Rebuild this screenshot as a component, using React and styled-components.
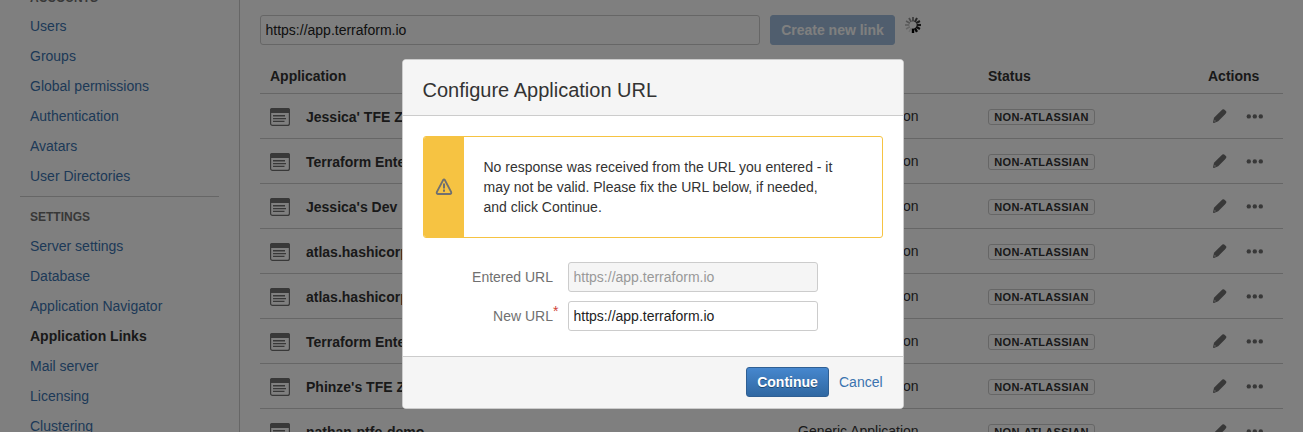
import React from "react";
import styled, { createGlobalStyle } from "styled-components";

const GlobalStyle = createGlobalStyle`
  * { box-sizing: border-box; }
  html, body { margin: 0; height: 100%; overflow: hidden; background: #fff; }
  body, input, button { font-family: "Liberation Sans", Arial, sans-serif; font-size: 14px; color: #333; }
`;

const Page = styled.div`
  position: relative;
  display: flex;
  height: 432px;
  overflow: hidden;
  background: #fff;
`;

const Sidebar = styled.nav`
  flex: none;
  width: 240px;
  padding: 0 20px;
  border-right: 1px solid #ccc;
`;

const NavHeading = styled.h2`
  margin: ${(p) => (p.$first ? "-11px" : "5px")} 0 0;
  padding: 0 10px;
  height: ${(p) => (p.$first ? "22px" : "35px")};
  border-top: ${(p) => (p.$first ? "0" : "1px solid #ccc")};
  line-height: ${(p) => (p.$first ? "19px" : "40px")};
  font-size: 12px;
  text-transform: uppercase;
  color: #707070;
`;

const NavItem = styled.a`
  display: block;
  height: 30px;
  padding-left: 10px;
  line-height: 30px;
  white-space: nowrap;
  color: ${(p) => (p.$active ? "#333" : "#3b73af")};
  font-weight: ${(p) => (p.$active ? 700 : 400)};
`;

const Main = styled.main`
  flex: 1;
  padding: 15px 20px 0;
`;

const LinkForm = styled.div`
  display: flex;
  gap: 10px;
  height: 30px;
`;

const TextInput = styled.input`
  width: ${(p) => p.$width}px;
  height: 30px;
  padding: 0 4.5px;
  border: 1px solid #ccc;
  border-radius: 3px;
  background: ${(p) => (p.disabled ? "#f5f5f5" : "#fff")};
  color: ${(p) => (p.disabled ? "#999" : "#222")};
  outline: 0;
`;

const Button = styled.button`
  width: ${(p) => p.$width}px;
  height: 30px;
  padding: 0;
  border: 1px solid ${(p) => (p.$busy ? "#a0bddc" : "#2f5f93")};
  border-radius: 3px;
  background: ${(p) => (p.$busy ? "#a0bddc" : "linear-gradient(#4687ce, #3068a2)")};
  color: #fff;
  text-shadow: ${(p) => (p.$busy ? "none" : "0 1px 0 rgba(0,0,0,.4)")};
  font-weight: 700;
  white-space: nowrap;
`;

const SpinnerSvg = styled.svg`
  margin-top: 2px;
`;

const HeadRow = styled.div`
  display: grid;
  grid-template-columns: 528px 190px 220px 85px;
  height: 34px;
  margin-top: 15px;
  border-bottom: 1px solid #ccc;
  line-height: 33px;
  font-weight: 700;
  > span { padding-left: 10px; }
`;

const Row = styled.div`
  display: grid;
  grid-template-columns: 528px 190px 220px 85px;
  align-items: center;
  height: 45px;
  border-bottom: 1px solid #ccc;
`;

const NameCell = styled.div`
  display: flex;
  align-items: center;
  gap: 16px;
  padding: 1px 0 0 10px;
  font-weight: 700;
`;

const TypeCell = styled.div`
  padding-left: 10px;
`;

const StatusCell = styled.div`
  display: flex;
  padding: 1px 0 0 10px;
`;

const Lozenge = styled.span`
  width: 107px;
  height: 16px;
  border: 1px solid #ccc;
  border-radius: 3px;
  text-align: center;
  line-height: 15px;
  font-size: 11px;
  font-weight: 700;
  letter-spacing: 0.32px;
`;

const ActionCell = styled.div`
  display: flex;
  align-items: center;
  gap: 19px;
  padding-left: 15px;
`;

const Blanket = styled.div`
  position: absolute;
  inset: 0;
  background: rgba(0, 0, 0, 0.5);
`;

const Dialog = styled.section`
  position: absolute;
  left: 402px;
  top: 59px;
  width: 502px;
  height: 350px;
  display: flex;
  flex-direction: column;
  overflow: hidden;
  border: 1px solid #ccc;
  border-radius: 4px;
  background: #fff;
`;

const DialogHeader = styled.h1`
  margin: 0;
  height: 56px;
  padding-left: 19.5px;
  border-bottom: 1px solid #ccc;
  background: #f5f5f5;
  line-height: 60px;
  font-size: 20px;
  font-weight: 400;
`;

const DialogBody = styled.div`
  flex: 1;
  padding: 20px;
`;

const DialogFooter = styled.footer`
  display: flex;
  align-items: flex-start;
  justify-content: flex-end;
  gap: 10px;
  height: 52px;
  padding: 10px 20px;
  border-top: 1px solid #ccc;
  background: #f5f5f5;
`;

const CancelLink = styled.a`
  width: 44px;
  line-height: 30px;
  color: #3b73af;
`;

const Warning = styled.div`
  display: flex;
  height: 102px;
  border: 1px solid #f6c342;
  border-radius: 3px;
  overflow: hidden;
`;

const WarningStrip = styled.div`
  flex: none;
  display: flex;
  align-items: center;
  justify-content: center;
  width: 40px;
  background: #f6c342;
`;

const WarningText = styled.p`
  margin: 0;
  padding: 20px 0 0 19.5px;
  line-height: 20px;
  white-space: nowrap;
`;

const Field = styled.label`
  display: flex;
  align-items: center;
  gap: 15px;
  margin-top: ${(p) => p.$gap}px;
`;

const FieldLabel = styled.span`
  position: relative;
  width: 130px;
  text-align: right;
  color: #707070;
`;

const Required = styled.span`
  position: absolute;
  left: 100%;
  top: -5px;
  color: #d04437;
`;

function AppIcon() {
  return (
    <svg width="20" height="18" viewBox="0 0 20 18">
      <rect x="0.6" y="0.6" width="18.8" height="16.8" rx="2" fill="none" stroke="#707070" strokeWidth="1.2" />
      <path d="M0 5V2a2 2 0 0 1 2-2h16a2 2 0 0 1 2 2v3z" fill="#707070" />
      <path d="M3 7.8h12M3 10.6h13M3 13.4h11.5" stroke="#707070" strokeWidth="1.4" />
    </svg>
  );
}

function PencilIcon() {
  return (
    <svg width="14" height="15" viewBox="0 0 14 15" fill="#707070">
      <path d="M8.3 1.4 9.4.5q1-.7 1.8 0l1.7 1.6q.8.8.2 1.8l-1.2 1.7-6.7 6.6-4.2 1.7q-1 .2-.9-.8l.9-4.3z" />
      <circle cx="1.9" cy="11.9" r=".9" fill="#b5b5b5" />
    </svg>
  );
}

function MoreIcon() {
  return (
    <svg width="18" height="6" viewBox="0 0 18 6" fill="#707070">
      <circle cx="2.8" cy="3.4" r="2.2" />
      <circle cx="8.8" cy="3.4" r="2.2" />
      <circle cx="14.8" cy="3.4" r="2.2" />
    </svg>
  );
}

function Spinner() {
  const bars = Array.from({ length: 12 }, (_, i) => i);
  return (
    <SpinnerSvg width="17" height="17" viewBox="-8 -8 17 17">
      {bars.map((i) => (
        <path
          key={i}
          d="M0 3.6V8"
          stroke="#000"
          strokeWidth={2.4 - i * 0.08}
          strokeOpacity={i < 6 ? 1 - i * 0.06 : 0.9 - i * 0.07}
          transform={`rotate(${-i * 30})`}
        />
      ))}
    </SpinnerSvg>
  );
}

function WarningIcon() {
  return (
    <svg width="18" height="18" viewBox="0 0 18 18" fill="none" stroke="#707070" strokeLinejoin="round">
      <path d="M8.1 2.1Q9 .7 9.9 2.1l6.2 11.8q.6 1.9-1 2.1H2.9q-1.6-.2-1-2.1z" strokeWidth="1.9" />
      <path d="M9 5.4v5M9 11.6v2.2" strokeWidth="2" />
    </svg>
  );
}

const accounts = ["Users", "Groups", "Global permissions", "Authentication", "Avatars", "User Directories"];
const settings = [
  "Server settings",
  "Database",
  "Application Navigator",
  "Application Links",
  "Mail server",
  "Licensing",
  "Clustering",
];
const links = [
  "Jessica' TFE Z",
  "Terraform Enterprise",
  "Jessica's Dev",
  "atlas.hashicorp.com",
  "atlas.hashicorp.com",
  "Terraform Enterprise",
  "Phinze's TFE Z",
  "nathan-ptfe-demo",
];

export default function App() {
  return (
    <>
      <GlobalStyle />
      <Page>
        <Sidebar>
          <NavHeading $first>Accounts</NavHeading>
          {accounts.map((t) => (
            <NavItem key={t}>{t}</NavItem>
          ))}
          <NavHeading>Settings</NavHeading>
          {settings.map((t) => (
            <NavItem key={t} $active={t === "Application Links"}>
              {t}
            </NavItem>
          ))}
        </Sidebar>
        <Main>
          <LinkForm>
            <TextInput $width={500} defaultValue="https://app.terraform.io" />
            <Button $width={125} $busy>
              Create new link
            </Button>
            <Spinner />
          </LinkForm>
          <HeadRow>
            <span>Application</span>
            <span />
            <span>Status</span>
            <span>Actions</span>
          </HeadRow>
          {links.map((name, i) => (
            <Row key={i}>
              <NameCell>
                <AppIcon />
                {name}
              </NameCell>
              <TypeCell>Generic Application</TypeCell>
              <StatusCell>
                <Lozenge>NON-ATLASSIAN</Lozenge>
              </StatusCell>
              <ActionCell>
                <PencilIcon />
                <MoreIcon />
              </ActionCell>
            </Row>
          ))}
        </Main>
        <Blanket />
        <Dialog>
          <DialogHeader>Configure Application URL</DialogHeader>
          <DialogBody>
            <Warning>
              <WarningStrip>
                <WarningIcon />
              </WarningStrip>
              <WarningText>
                No response was received from the URL you entered - it
                <br />
                may not be valid. Please fix the URL below, if needed,
                <br />
                and click Continue.
              </WarningText>
            </Warning>
            <Field $gap={24}>
              <FieldLabel>Entered URL</FieldLabel>
              <TextInput $width={250} disabled defaultValue="https://app.terraform.io" />
            </Field>
            <Field $gap={9}>
              <FieldLabel>
                New URL<Required>*</Required>
              </FieldLabel>
              <TextInput $width={250} defaultValue="https://app.terraform.io" />
            </Field>
          </DialogBody>
          <DialogFooter>
            <Button $width={83}>Continue</Button>
            <CancelLink>Cancel</CancelLink>
          </DialogFooter>
        </Dialog>
      </Page>
    </>
  );
}
